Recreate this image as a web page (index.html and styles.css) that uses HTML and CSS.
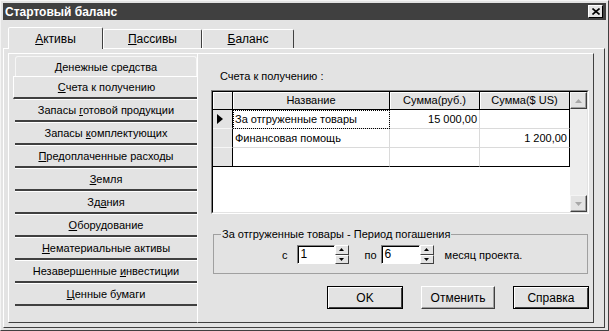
FILE: index.html
```html
<!DOCTYPE html>
<html lang="ru">
<head>
  <meta charset="UTF-8" />
  <title>Стартовый баланс</title>
  <link rel="stylesheet" href="styles.css">
</head>
<body>
  <div class="window">
    <div class="titlebar">
      <span class="title">Стартовый баланс</span>
      <div class="close">
        <svg width="8" height="7" viewBox="0 0 8 7"><path d="M0.5 0.5 L7.5 6.5 M7.5 0.5 L0.5 6.5" stroke="#000" stroke-width="1.6" fill="none"/></svg>
      </div>
    </div>

    <!-- Tabs -->
    <div class="tabs">
      <div class="tab active" style="width:95px"><span><u>А</u>ктивы</span></div>
      <div class="tab" style="width:99px"><span><u>П</u>ассивы</span></div>
      <div class="tab" style="width:92px"><span><u>Б</u>аланс</span></div>
    </div>

    <div class="page">
      <!-- Asset categories -->
      <div class="side">
        <div class="side-btn first"><span><u>Д</u>енежные средства</span></div>
        <div class="side-btn current"><span><u>С</u>чета к получению</span></div>
        <div class="side-btn"><span>Запасы <u>г</u>отовой продукции</span></div>
        <div class="side-btn"><span>Запасы <u>к</u>омплектующих</span></div>
        <div class="side-btn"><span><u>П</u>редоплаченные расходы</span></div>
        <div class="side-btn"><span><u>З</u>емля</span></div>
        <div class="side-btn"><span>Зд<u>а</u>ния</span></div>
        <div class="side-btn"><span><u>О</u>борудование</span></div>
        <div class="side-btn"><span><u>Н</u>ематериальные активы</span></div>
        <div class="side-btn"><span>Незавершенные <u>и</u>нвестиции</span></div>
        <div class="side-btn"><span><u>Ц</u>енные бумаги</span></div>
      </div>

      <div class="main">
        <div class="caption">Счета к получению :</div>

        <!-- Grid -->
        <div class="grid">
          <div class="grid-inner">
            <div class="cells">
              <div class="hd"></div>
              <div class="hd">Название</div>
              <div class="hd">Сумма(руб.)</div>
              <div class="hd">Сумма($ US)</div>

              <div class="ind">
                <svg width="6" height="10" viewBox="0 0 6 10"><polygon points="0,0 6,5 0,10" fill="#000"/></svg>
              </div>
              <div class="cell focus">За отгруженные товары</div>
              <div class="cell num">15 000,00</div>
              <div class="cell num last-col"></div>

              <div class="ind"></div>
              <div class="cell">Финансовая помощь</div>
              <div class="cell num"></div>
              <div class="cell num last-col">1 200,00</div>

              <div class="ind last-row"></div>
              <div class="cell last-row"></div>
              <div class="cell last-row"></div>
              <div class="cell last-col last-row"></div>
            </div>
            <div class="scroll">
              <div class="arrow">
                <svg width="7" height="4" viewBox="0 0 7 4"><polygon points="0,4 3.5,0 7,4" fill="#a8a8a8"/></svg>
              </div>
              <div class="arrow">
                <svg width="7" height="4" viewBox="0 0 7 4"><polygon points="0,0 7,0 3.5,4" fill="#a8a8a8"/></svg>
              </div>
            </div>
          </div>
        </div>

        <!-- Repayment period -->
        <fieldset class="period">
          <legend>За отгруженные товары - Период погашения</legend>
          <div class="period-row">
            <span class="lbl-from">с</span>
            <div class="field">1</div>
            <div class="spin">
              <div class="spin-btn"><svg width="5" height="3" viewBox="0 0 5 3"><polygon points="0,3 2.5,0 5,3" fill="#000"/></svg></div>
              <div class="spin-btn"><svg width="5" height="3" viewBox="0 0 5 3"><polygon points="0,0 5,0 2.5,3" fill="#000"/></svg></div>
            </div>
            <span class="lbl-to">по</span>
            <div class="field wide">6</div>
            <div class="spin">
              <div class="spin-btn"><svg width="5" height="3" viewBox="0 0 5 3"><polygon points="0,3 2.5,0 5,3" fill="#000"/></svg></div>
              <div class="spin-btn"><svg width="5" height="3" viewBox="0 0 5 3"><polygon points="0,0 5,0 2.5,3" fill="#000"/></svg></div>
            </div>
            <span class="lbl-month">месяц проекта.</span>
          </div>
        </fieldset>

        <div class="actions">
          <button class="btn default">OK</button>
          <button class="btn narrow">Отменить</button>
          <button class="btn default">Справка</button>
        </div>
      </div>
    </div>
  </div>
</body>
</html>
```

FILE: styles.css
```css
* { box-sizing: border-box; }
body {
  margin: 0;
  font-family: "Liberation Sans", Arial, sans-serif;
  font-size: 11px;
  color: #000;
  background: #e3e3e3;
}
.window {
  width: 609px;
  height: 331px;
  padding: 2px;
  border: 1px solid;
  border-color: #f4f4f4 #404040 #404040 #f4f4f4;
  background: #e3e3e3;
  display: flex;
  flex-direction: column;
}
.titlebar {
  height: 17px;
  flex: none;
  background: #404040;
  display: flex;
  align-items: center;
  justify-content: space-between;
  padding: 0 3px 0 2px;
}
.title {
  color: #fff;
  font-weight: bold;
  font-size: 12px;
}
.close {
  width: 15px;
  height: 13px;
  background: #e3e3e3;
  border: 1px solid;
  border-color: #fff #000 #000 #fff;
  display: flex;
  align-items: center;
  justify-content: center;
}

/* tabs */
.tabs {
  height: 28px;
  flex: none;
  display: flex;
  align-items: flex-end;
  padding-left: 5px;
}
.tab {
  height: 19px;
  display: flex;
  align-items: center;
  justify-content: center;
  border: 1px solid;
  border-bottom: none;
  border-color: #fff #404040 transparent #fff;
  border-radius: 2px 2px 0 0;
  font-size: 12px;
}
.tab.active {
  height: 22px;
  margin-bottom: -1px;
  background: #e3e3e3;
  position: relative;
  z-index: 1;
}

.page {
  flex: 1;
  display: flex;
  margin-right: 1px;
  padding: 4px 10px 4px 4px;
  border: 1px solid;
  border-color: #fff #404040 #404040 #fff;
}

/* left buttons */
.side {
  width: 189px;
  padding: 2px 0 0 6px;
  border-top: 1px solid #fff;
  border-left: 1px solid #fff;
  border-bottom: 1px solid #404040;
}
.side-btn {
  height: 23px;
  display: flex;
  align-items: center;
  justify-content: center;
  border-top: 1px solid #fff;
  border-bottom: 2px solid #404040;
  white-space: nowrap;
}
.side-btn.first {
  height: 20px;
  border: 1px solid #f6f6f6;
  border-bottom: none;
  border-radius: 3px 3px 0 0;
}
.side-btn.current {
  margin-left: -2px;
  padding-left: 2px;
  border-left: 1px solid #fff;
}

/* right part */
.main {
  width: 397px;
  display: flex;
  flex-direction: column;
  padding-left: 13px;
  border: 1px solid;
  border-color: #fff #404040 #404040 #fff;
}
.caption {
  margin: 16px 0 0 9px;
  line-height: 13px;
}
.grid {
  margin-top: 7px;
  width: 378px;
  height: 124px;
  border: 1px solid;
  border-color: #808080 #fff #fff #808080;
}
.grid-inner {
  height: 100%;
  display: flex;
  background: #fff;
  border: 1px solid;
  border-color: #000 #e3e3e3 #e3e3e3 #000;
}
.cells {
  width: 357px;
  display: grid;
  grid-template-columns: 20px 157px 90px 90px;
  grid-template-rows: 18px 19px 19px 19px;
  align-content: start;
}
.hd {
  background: #e3e3e3;
  border-right: 1px solid #000;
  border-bottom: 1px solid #000;
  box-shadow: inset 1px 1px #fff;
  text-align: center;
  line-height: 17px;
  white-space: nowrap;
}
.ind {
  background: #e3e3e3;
  border-right: 1px solid #000;
  border-bottom: 1px solid #f6f6f6;
  display: flex;
  align-items: center;
  padding-left: 4px;
}
.cell {
  border-right: 1px solid #dadada;
  border-bottom: 1px solid #dadada;
  line-height: 18px;
  padding: 0 2px;
  white-space: nowrap;
  overflow: hidden;
}
.num { text-align: right; }
.focus {
  outline: 1px dotted #000;
  outline-offset: -1px;
}
.cells .last-col { border-right-color: #000; }
.cells .last-row { border-bottom-color: #000; }
.scroll {
  width: 17px;
  display: flex;
  flex-direction: column;
  justify-content: space-between;
  background: #ededed;
}
.arrow {
  height: 17px;
  background: #e3e3e3;
  border: 1px solid;
  border-color: #f4f4f4 #404040 #404040 #f4f4f4;
  box-shadow: inset -1px -1px #a0a0a0;
  display: flex;
  align-items: center;
  justify-content: center;
}

/* period */
.period {
  margin: 14px 0 0 2px;
  width: 375px;
  padding: 4px 0 9px;
  border: 1px solid #a0a0a0;
}
.period legend {
  margin-left: 7px;
  padding: 0 1px;
  line-height: 13px;
}
.period-row {
  display: flex;
  align-items: center;
  height: 19px;
  padding-left: 68px;
}
.lbl-from { margin-right: 9px; }
.lbl-to { margin: 0 4px 0 16px; }
.lbl-month { margin-left: 11px; }
.field {
  width: 38px;
  height: 19px;
  background: #fff;
  border: 1px solid;
  border-color: #808080 #fff #fff #808080;
  box-shadow: inset 1px 1px #000;
  padding-left: 3px;
  line-height: 17px;
  font-size: 12px;
}
.field.wide { width: 39px; }
.spin {
  width: 14px;
  height: 19px;
  display: flex;
  flex-direction: column;
}
.spin-btn {
  flex: 1;
  background: #e3e3e3;
  border: 1px solid;
  border-color: #fff #404040 #404040 #fff;
  display: flex;
  align-items: center;
  justify-content: center;
}

/* buttons */
.actions {
  width: 378px;
  margin-top: 12px;
  display: flex;
  justify-content: flex-end;
  gap: 18px;
}
.btn {
  width: 76px;
  height: 23px;
  padding: 0;
  font: inherit;
  font-size: 12px;
  color: #000;
  background: #e3e3e3;
  border: 1px solid;
  border-color: #fff #404040 #404040 #fff;
  box-shadow: inset -1px -1px #a0a0a0;
}
.btn.narrow { width: 74px; }
.btn.default {
  border-color: #000;
  box-shadow: inset 1px 1px #fff, inset -1px -1px #404040;
}
```
